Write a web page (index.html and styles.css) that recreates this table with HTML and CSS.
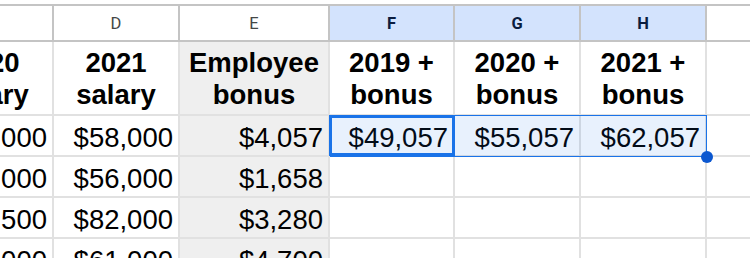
FILE: index.html
```html
<!DOCTYPE html>
<html>
<head>
<meta charset="utf-8">
<link rel="stylesheet" href="styles.css">
</head>
<body>
<div class="viewport">
  <div class="sheet">
    <div class="cell colhead"></div>
    <div class="cell colhead">D</div>
    <div class="cell colhead">E</div>
    <div class="cell colhead sel">F</div>
    <div class="cell colhead sel">G</div>
    <div class="cell colhead sel">H</div>
    <div class="cell colhead"></div>

    <div class="cell title">2020 salary</div>
    <div class="cell title">2021 salary</div>
    <div class="cell title grey">Employee bonus</div>
    <div class="cell title">2019 + bonus</div>
    <div class="cell title">2020 + bonus</div>
    <div class="cell title">2021 + bonus</div>
    <div class="cell title"></div>

    <div class="cell num">$51,000</div>
    <div class="cell num">$58,000</div>
    <div class="cell num grey">$4,057</div>
    <div class="cell num">$49,057</div>
    <div class="cell num">$55,057</div>
    <div class="cell num">$62,057</div>
    <div class="cell num"></div>

    <div class="cell num">$53,000</div>
    <div class="cell num">$56,000</div>
    <div class="cell num grey">$1,658</div>
    <div class="cell num"></div>
    <div class="cell num"></div>
    <div class="cell num"></div>
    <div class="cell num"></div>

    <div class="cell num">$78,500</div>
    <div class="cell num">$82,000</div>
    <div class="cell num grey">$3,280</div>
    <div class="cell num"></div>
    <div class="cell num"></div>
    <div class="cell num"></div>
    <div class="cell num"></div>

    <div class="cell num">$59,000</div>
    <div class="cell num">$61,000</div>
    <div class="cell num grey">$4,700</div>
    <div class="cell num"></div>
    <div class="cell num"></div>
    <div class="cell num"></div>
    <div class="cell num"></div>

    <div class="range"></div>
    <div class="active"></div>
    <div class="handle"></div>
  </div>
</div>
</body>
</html>
```

FILE: styles.css
```css
html, body {
  margin: 0;
  padding: 0;
  background: #ffffff;
}

.viewport {
  width: 750px;
  height: 258px;
  overflow: hidden;
  padding-top: 4px;
  box-sizing: border-box;
}

.sheet {
  position: relative;
  margin-left: -74px;
  display: grid;
  grid-template-columns: 128px 126px 150px 125px 126px 126px 126px;
  grid-template-rows: 38px 74px 41px 41px 41px 41px;
  font-family: "Liberation Sans", Arial, sans-serif;
  color: #000000;
}

.cell {
  box-sizing: border-box;
  border-right: 2px solid #e1e1e1;
  border-bottom: 2px solid #e1e1e1;
  display: flex;
  overflow: hidden;
  white-space: nowrap;
}

.colhead {
  border-top: 2px solid #c4c4c4;
  border-right-color: #c4c4c4;
  border-bottom-color: #c4c4c4;
  align-items: center;
  justify-content: center;
  font-family: Roboto, "Liberation Sans", sans-serif;
  font-size: 16.5px;
  color: #444746;
  padding-top: 1px;
}

.colhead.sel {
  background: #d3e3fd;
  color: #0a1d3f;
  font-weight: 700;
  font-size: 16.5px;
}

.title {
  white-space: normal;
  text-align: center;
  justify-content: center;
  align-items: flex-end;
  font-weight: 700;
  font-size: 27.5px;
  line-height: 31.5px;
  padding: 0 2px 4px;
}

.num {
  justify-content: flex-end;
  align-items: flex-end;
  font-size: 27.5px;
  line-height: 31.5px;
  padding: 0 5px 2px 0;
}

.grey {
  background: #efefef;
}

.range {
  position: absolute;
  left: 404px;
  top: 111px;
  width: 377px;
  height: 42px;
  box-sizing: border-box;
  border: 1px solid #1a73e8;
  background: rgba(26, 115, 232, 0.1);
}

.active {
  position: absolute;
  left: 403px;
  top: 111px;
  width: 126px;
  height: 41px;
  box-sizing: border-box;
  border: 3px solid #1a73e8;
}

.handle {
  position: absolute;
  left: 775px;
  top: 147px;
  width: 12px;
  height: 12px;
  border-radius: 50%;
  background: #0b57d0;
}
```
